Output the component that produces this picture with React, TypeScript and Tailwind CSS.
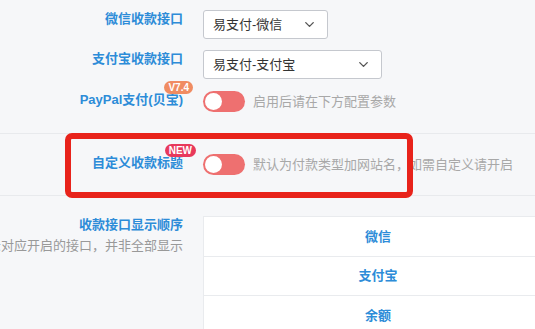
import React from 'react';
import { ChevronDown } from 'lucide-react';

function Select({ value, width }: { value: string; width: string }) {
    return (
        <div className={`${width} h-[29px] flex items-center justify-between pl-[9px] pr-[10px] bg-white border border-[#c5c8ce] rounded-[3px] text-[13px] text-[#333]`}>
            <span>{value}</span>
            <ChevronDown size={15} strokeWidth={2.2} className="text-[#555]" />
        </div>
    );
}

function Toggle() {
    return (
        <div className="w-[42px] h-[21px] rounded-full bg-[#ee7070] flex items-center pl-[2px] shrink-0">
            <div className="w-[17px] h-[17px] rounded-full bg-white" />
        </div>
    );
}

function Label({ text, children }: { text: string; children?: React.ReactNode }) {
    return (
        <div className="w-[183px] shrink-0 flex justify-end">
            <div className="relative leading-[18px] text-[13px] font-bold text-[#2d8cd8]">
                {text}
                {children}
            </div>
        </div>
    );
}

export default function App() {
    return (
        <div
            className="relative w-[535px] h-[329px] overflow-hidden bg-[#f6f7f9]"
            style={{ fontFamily: '"Liberation Sans", "Noto Sans CJK SC", sans-serif' }}
        >
            <div className="pt-[10px] pb-[21px] flex flex-col gap-[11px]">
                <div className="flex items-start gap-[20px]">
                    <Label text="微信收款接口" />
                    <Select value="易支付-微信" width="w-[125px]" />
                </div>
                <div className="flex items-start gap-[20px]">
                    <Label text="支付宝收款接口" />
                    <Select value="易支付-支付宝" width="w-[179px]" />
                </div>
                <div className="flex items-start gap-[20px] mt-px">
                    <Label text="PayPal支付(贝宝)">
                        <span className="absolute -top-[10px] -right-[10px] h-[13px] px-[4px] rounded-full bg-[#f08c62] text-white text-[10px] font-bold leading-[13px]">
                            V7.4
                        </span>
                    </Label>
                    <div className="flex items-center gap-[8px]">
                        <Toggle />
                        <span className="text-[13px] text-[#a8a8a8] leading-[18px]">启用后请在下方配置参数</span>
                    </div>
                </div>
            </div>

            <div className="border-t border-[#e8eaed] pt-[20px] pb-[20px]">
                <div className="flex items-start gap-[20px]">
                    <Label text="自定义收款标题">
                        <span className="absolute -top-[10px] -right-[13px] h-[13px] px-[4px] rounded-full bg-[#e8395b] text-white text-[10px] font-bold leading-[13px]">
                            NEW
                        </span>
                    </Label>
                    <div className="flex items-center gap-[8px]">
                        <Toggle />
                        <span className="text-[13px] text-[#a8a8a8] leading-[18px] whitespace-nowrap">默认为付款类型加网站名，如需自定义请开启</span>
                    </div>
                </div>
            </div>

            <div className="border-t border-[#e8eaed] pt-[20px]">
                <div className="flex items-start gap-[20px]">
                    <div className="w-[183px] shrink-0 flex flex-col items-end">
                        <div className="leading-[18px] text-[13px] font-bold text-[#2d8cd8]">收款接口显示顺序</div>
                        <div className="mt-[3px] leading-[18px] text-[13px] text-[#999] whitespace-nowrap">仅显示对应开启的接口，并非全部显示</div>
                    </div>
                    <div className="w-[350px] shrink-0 bg-white border border-[#e9ebee] text-[13px] font-bold text-[#2d8cd8]">
                        <div className="h-[40px] flex items-center justify-center border-b border-[#e9ebee]">微信</div>
                        <div className="h-[39px] flex items-center justify-center border-b border-[#e9ebee]">支付宝</div>
                        <div className="h-[40px] flex items-center justify-center">余额</div>
                    </div>
                </div>
            </div>

            <div className="absolute left-[65px] top-[133px] w-[348px] h-[65px] border-[6px] border-[#e8231b] rounded-[7px]" />
        </div>
    );
}
